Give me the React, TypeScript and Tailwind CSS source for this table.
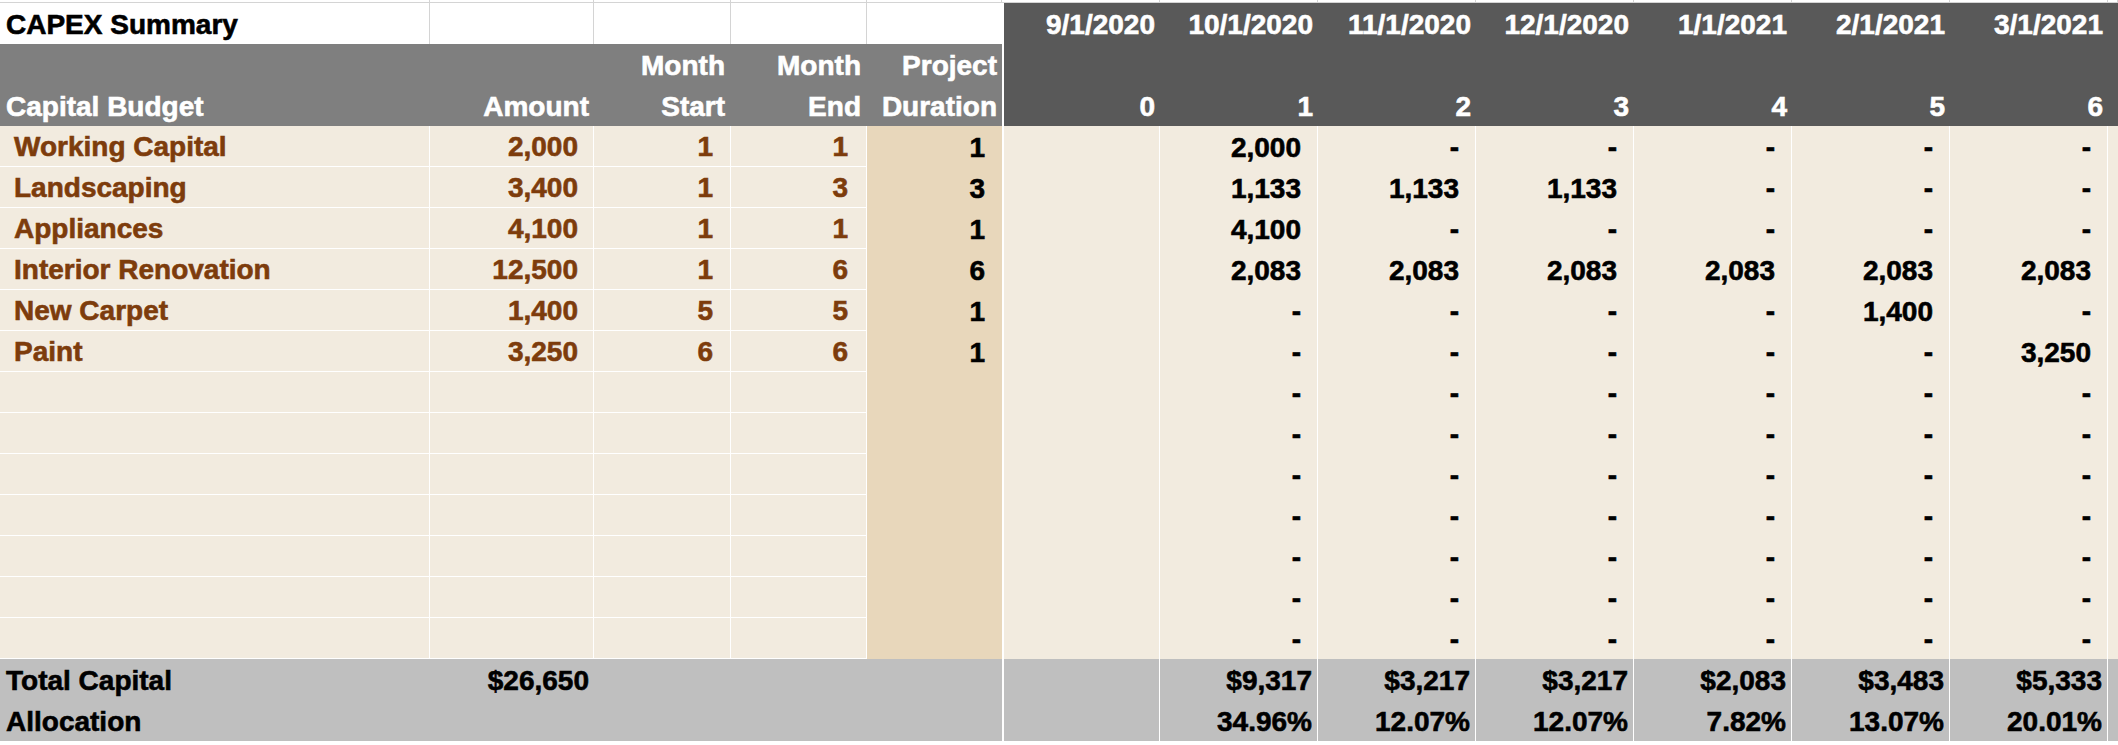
const cols =
  "grid grid-cols-[430px_164px_137px_136px_135px_158px_158px_158px_158px_158px_158px_158px_1fr]";

const cell = "flex h-full items-end overflow-hidden whitespace-nowrap pb-[5px] leading-[28px]";

const dates = ["9/1/2020", "10/1/2020", "11/1/2020", "12/1/2020", "1/1/2021", "2/1/2021", "3/1/2021"];

type Item = {
  name: string;
  amount: string;
  start: string;
  end: string;
  duration: string;
  months: string[];
};

const items: Item[] = [
  { name: "Working Capital", amount: "2,000", start: "1", end: "1", duration: "1", months: ["2,000", "-", "-", "-", "-", "-"] },
  { name: "Landscaping", amount: "3,400", start: "1", end: "3", duration: "3", months: ["1,133", "1,133", "1,133", "-", "-", "-"] },
  { name: "Appliances", amount: "4,100", start: "1", end: "1", duration: "1", months: ["4,100", "-", "-", "-", "-", "-"] },
  { name: "Interior Renovation", amount: "12,500", start: "1", end: "6", duration: "6", months: ["2,083", "2,083", "2,083", "2,083", "2,083", "2,083"] },
  { name: "New Carpet", amount: "1,400", start: "5", end: "5", duration: "1", months: ["-", "-", "-", "-", "1,400", "-"] },
  { name: "Paint", amount: "3,250", start: "6", end: "6", duration: "1", months: ["-", "-", "-", "-", "-", "3,250"] },
];

// blank rows still show the dashes in the monthly columns
const blanks: Item[] = Array.from({ length: 7 }, () => ({
  name: "",
  amount: "",
  start: "",
  end: "",
  duration: "",
  months: ["-", "-", "-", "-", "-", "-"],
}));

const totals = ["$9,317", "$3,217", "$3,217", "$2,083", "$3,483", "$5,333"];
const allocation = ["34.96%", "12.07%", "12.07%", "7.82%", "13.07%", "20.01%"];

function DataRow({ item }: { item: Item }) {
  const left = "border-r border-b border-white bg-[#f2ebdf] text-[#7d3c0c]";
  return (
    <div className={`${cols} h-[41px]`}>
      <div className={`${cell} ${left} pl-[14px]`}>{item.name}</div>
      <div className={`${cell} ${left} justify-end pr-[15px]`}>{item.amount}</div>
      <div className={`${cell} ${left} justify-end pr-[17px]`}>{item.start}</div>
      <div className={`${cell} ${left} justify-end pr-[18px]`}>{item.end}</div>
      <div className={`${cell} justify-end bg-[#e8d7bb] pr-[17px] text-black`}>{item.duration}</div>
      <div className={`${cell} border-l-2 border-r border-white bg-[#f2ebdf]`} />
      {item.months.map((m, i) => (
        <div key={i} className={`${cell} justify-end border-r border-white bg-[#f2ebdf] pr-[16px] text-black`}>
          {m}
        </div>
      ))}
      <div className={`${cell} bg-[#f2ebdf]`} />
    </div>
  );
}

function TotalRow({ label, amount, values }: { label: string; amount: string; values: string[] }) {
  return (
    <div className={`${cols} h-[41px] bg-[#bfbfbf] text-black`}>
      <div className={`${cell} pl-[6px]`}>{label}</div>
      <div className={`${cell} justify-end pr-[5px]`}>{amount}</div>
      <div className={cell} />
      <div className={cell} />
      <div className={cell} />
      <div className={`${cell} border-l-2 border-r border-white`} />
      {values.map((v, i) => (
        <div key={i} className={`${cell} justify-end border-r border-white pr-[5px]`}>
          {v}
        </div>
      ))}
      <div className={cell} />
    </div>
  );
}

export default function App() {
  return (
    <div className="h-[745px] w-[2118px] overflow-hidden bg-white font-['Liberation_Sans',Arial,sans-serif] text-[28px] font-bold [-webkit-text-stroke:0.6px_currentColor]">
      {/* sliver of the row above */}
      <div className={`${cols} h-[3px] border-b border-[#d4d4d4]`}>
        {Array.from({ length: 13 }, (_, i) => (
          <div key={i} className="h-full border-r border-[#d4d4d4]" />
        ))}
      </div>

      {/* title row + dates */}
      <div className={`${cols} h-[41px]`}>
        <div className={`${cell} border-r border-[#d4d4d4] pl-[6px] text-black`}>CAPEX Summary</div>
        <div className={`${cell} border-r border-[#d4d4d4]`} />
        <div className={`${cell} border-r border-[#d4d4d4]`} />
        <div className={`${cell} border-r border-[#d4d4d4]`} />
        <div className={cell} />
        {dates.map((d, i) => (
          <div
            key={d}
            className={`${cell} justify-end bg-[#595959] pr-[5px] text-white ${i === 0 ? "border-l-2 border-white" : ""}`}
          >
            {d}
          </div>
        ))}
        <div className={`${cell} bg-[#595959]`} />
      </div>

      {/* header rows */}
      <div className={`${cols} h-[41px] text-white`}>
        <div className={`${cell} bg-[#7f7f7f]`} />
        <div className={`${cell} bg-[#7f7f7f]`} />
        <div className={`${cell} justify-end bg-[#7f7f7f] pr-[6px]`}>Month</div>
        <div className={`${cell} justify-end bg-[#7f7f7f] pr-[6px]`}>Month</div>
        <div className={`${cell} justify-end bg-[#7f7f7f] pr-[5px]`}>Project</div>
        <div className={`${cell} border-l-2 border-white bg-[#595959]`} />
        {Array.from({ length: 7 }, (_, i) => (
          <div key={i} className={`${cell} bg-[#595959]`} />
        ))}
      </div>
      <div className={`${cols} h-[41px] text-white`}>
        <div className={`${cell} bg-[#7f7f7f] pl-[6px]`}>Capital Budget</div>
        <div className={`${cell} justify-end bg-[#7f7f7f] pr-[5px]`}>Amount</div>
        <div className={`${cell} justify-end bg-[#7f7f7f] pr-[6px]`}>Start</div>
        <div className={`${cell} justify-end bg-[#7f7f7f] pr-[6px]`}>End</div>
        <div className={`${cell} justify-end bg-[#7f7f7f] pr-[5px]`}>Duration</div>
        {[0, 1, 2, 3, 4, 5, 6].map((n) => (
          <div
            key={n}
            className={`${cell} justify-end bg-[#595959] pr-[5px] ${n === 0 ? "border-l-2 border-white" : ""}`}
          >
            {n}
          </div>
        ))}
        <div className={`${cell} bg-[#595959]`} />
      </div>

      {[...items, ...blanks].map((item, i) => (
        <DataRow key={i} item={item} />
      ))}

      <TotalRow label="Total Capital" amount="$26,650" values={totals} />
      <TotalRow label="Allocation" amount="" values={allocation} />
    </div>
  );
}
